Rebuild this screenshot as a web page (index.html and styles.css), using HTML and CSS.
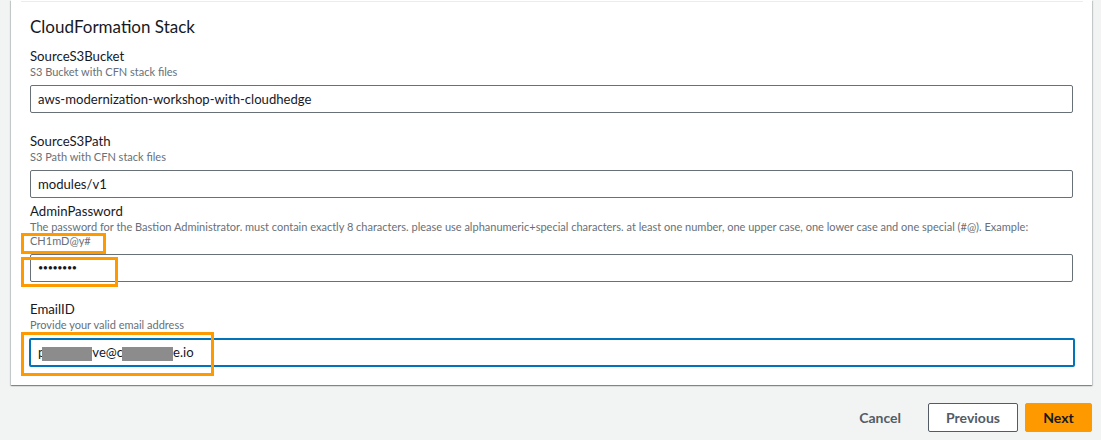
FILE: index.html
```html
<!DOCTYPE html>
<html>
<head>
<meta charset="utf-8">
<link rel="stylesheet" href="styles.css">
</head>
<body>
<div class="page">
  <section class="card">
    <div class="divider"></div>
    <div class="card-body">
      <h2 class="title">CloudFormation Stack</h2>

      <div class="field f1">
        <div class="label">SourceS3Bucket</div>
        <div class="desc">S3 Bucket with CFN stack files</div>
        <div class="input">aws-modernization-workshop-with-cloudhedge</div>
      </div>

      <div class="field f2">
        <div class="label">SourceS3Path</div>
        <div class="desc">S3 Path with CFN stack files</div>
        <div class="input">modules/v1</div>
      </div>

      <div class="field f3">
        <div class="label">AdminPassword</div>
        <div class="desc">The password for the Bastion Administrator. must contain exactly 8 characters. please use alphanumeric+special characters. at least one number, one upper case, one lower case and one special (#@). Example: CH1mD@y#</div>
        <div class="input pw">••••••••</div>
        <span class="mark mark-example"></span>
        <span class="mark mark-pw"></span>
      </div>

      <div class="field f4">
        <div class="label">EmailID</div>
        <div class="desc">Provide your valid email address</div>
        <div class="input focused">p<span class="redact r1"></span>ve@c<span class="redact r2"></span>e.io</div>
        <span class="mark mark-email"></span>
      </div>
    </div>
  </section>

  <div class="actions">
    <button class="btn btn-link">Cancel</button>
    <button class="btn btn-normal">Previous</button>
    <button class="btn btn-primary">Next</button>
  </div>
</div>
</body>
</html>
```

FILE: styles.css
```css
* { box-sizing: border-box; }

html, body {
  margin: 0;
  padding: 0;
  background: #f2f3f3;
  font-family: Lato, Roboto, "Liberation Sans", Arial, sans-serif;
  color: #16191f;
}

.page {
  width: 1101px;
  height: 440px;
  overflow: hidden;
}

.card {
  margin-left: 11px;
  width: 1081px;
  height: 385px;
  background: #ffffff;
  box-shadow: 0 1px 1px 0 rgba(0, 28, 36, 0.3), 1px 1px 1px 0 rgba(0, 28, 36, 0.15), -1px 1px 1px 0 rgba(0, 28, 36, 0.15);
  padding-top: 1px;
}

.divider {
  height: 1px;
  margin: 0 9px 0 10px;
  background: #eaeded;
}

.card-body {
  padding: 0 19px;
}

.title {
  margin: 0;
  padding-top: 14px;
  font-size: 17px;
  line-height: 22px;
  font-weight: 400;
  color: #16191f;
}

.field {
  position: relative;
}

.f1 { margin-top: 10px; }
.f2 { margin-top: 20px; }
.f3 { margin-top: 5px; }
.f4 { margin-top: 19px; }

.label {
  font-size: 13.2px;
  line-height: 17px;
  color: #16191f;
}

.desc {
  font-size: 11px;
  line-height: 14px;
  color: #687078;
  margin-bottom: 6px;
}

.input {
  height: 28px;
  border: 1px solid #687078;
  border-radius: 2px;
  padding: 0 7px;
  font-size: 13.1px;
  line-height: 26px;
  color: #16191f;
  white-space: nowrap;
}

.input.pw {
  font-size: 9px;
  letter-spacing: -0.4px;
}

.input.focused {
  border: 2px solid #0073bb;
  height: 29px;
  margin-left: -1px;
  margin-right: -2px;
  line-height: 25px;
}

.redact {
  display: inline-block;
  vertical-align: middle;
  height: 14px;
  background: #8c8c8c;
}
.r1 { width: 50px; margin-left: -3px; }
.r2 { width: 51px; margin-left: -1px; }

.mark {
  position: absolute;
  border: 3px solid #ff9900;
  pointer-events: none;
}
.mark-example { left: -9px; top: 30px; width: 85px; height: 21px; }
.mark-pw { left: -9px; top: 54px; width: 97px; height: 30px; }
.mark-email { left: -9px; top: 31px; width: 193px; height: 44px; }

.actions {
  display: flex;
  justify-content: flex-end;
  align-items: center;
  gap: 7px;
  padding: 18px 9px 0 0;
}

.btn {
  font-family: Lato, Roboto, "Liberation Sans", Arial, sans-serif;
  font-size: 14px;
  font-weight: 700;
  height: 29px;
  border-radius: 2px;
  cursor: pointer;
}

.btn-link {
  border: 0;
  background: transparent;
  color: #545b64;
  padding: 0 20px;
}

.btn-normal {
  width: 90px;
  border: 1px solid #545b64;
  background: #ffffff;
  color: #545b64;
}

.btn-primary {
  width: 67px;
  border: 1px solid #ff9900;
  background: #ff9900;
  color: #16191f;
}
```
